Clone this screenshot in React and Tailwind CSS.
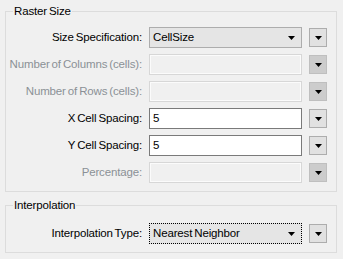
import React from "react";

const FONT = { fontFamily: '"Liberation Sans", Arial, sans-serif', wordSpacing: "-1px" };

function Arrow() {
  return (
    <svg width="7" height="4" viewBox="0 0 7 4" className="block">
      <polygon points="0,0 7,0 3.5,4" fill="#000" />
    </svg>
  );
}

function MenuButton({ disabled }) {
  return (
    <div
      className={`w-[18px] h-[19px] self-center flex items-center justify-center border ${
        disabled ? "bg-[#cccccc] border-[#bfbfbf]" : "bg-[#e1e1e1] border-[#adadad]"
      }`}
    >
      <Arrow />
    </div>
  );
}

function Combo({ value, focused }) {
  return (
    <div
      className={`h-[21px] flex items-center justify-between bg-[#e5e5e5] pl-[3px] pr-[6px] border ${
        focused ? "border-dotted border-black" : "border-[#adadad]"
      }`}
    >
      <span className="text-black leading-none">{value}</span>
      <Arrow />
    </div>
  );
}

function Field({ value, disabled }) {
  return disabled ? (
    <div className="h-[21px] border border-[#d7d7d7] bg-[#f0f0f0] shadow-[inset_0_0_0_1px_#fbfbfb]" />
  ) : (
    <div className="h-[21px] flex items-center border border-[#7a7a7a] bg-white pl-[3px] text-black">
      {value}
    </div>
  );
}

const rows = [
  { label: "Size Specification:", kind: "combo", value: "CellSize" },
  { label: "Number of Columns (cells):", kind: "field", disabled: true },
  { label: "Number of Rows (cells):", kind: "field", disabled: true },
  { label: "X Cell Spacing:", kind: "field", value: "5" },
  { label: "Y Cell Spacing:", kind: "field", value: "5" },
  { label: "Percentage:", kind: "field", disabled: true },
];

export default function App() {
  return (
    <div
      className="w-[343px] h-[259px] bg-[#f0f0f0] text-[11.5px] tracking-[-0.15px] pt-[3px] pl-[5px] overflow-hidden"
      style={FONT}
    >
      {/* Raster Size */}
      <fieldset className="w-[332px] border border-[#dcdcdc] pb-[8px]">
        <legend className="ml-[7px] px-px h-4 leading-4 text-black">Raster Size</legend>
        <div className="grid grid-cols-[136px_153px_18px] gap-x-[7px] gap-y-[6px] pt-[8px]">
          {rows.map((r) => (
            <React.Fragment key={r.label}>
              <div
                className={`h-[21px] flex items-center justify-end whitespace-nowrap ${
                  r.disabled ? "text-[#8b9096]" : "text-black"
                }`}
              >
                {r.label}
              </div>
              {r.kind === "combo" ? (
                <Combo value={r.value} />
              ) : (
                <Field value={r.value} disabled={r.disabled} />
              )}
              <MenuButton disabled={r.disabled} />
            </React.Fragment>
          ))}
        </div>
      </fieldset>

      {/* Interpolation */}
      <fieldset className="w-[332px] border border-[#dcdcdc] mt-[5px] pb-[8px]">
        <legend className="ml-[7px] px-px h-4 leading-4 text-black">Interpolation</legend>
        <div className="grid grid-cols-[136px_153px_18px] gap-x-[7px] pt-[10px]">
          <div className="h-[21px] flex items-center justify-end whitespace-nowrap text-black">
            Interpolation Type:
          </div>
          <Combo value="Nearest Neighbor" focused />
          <MenuButton />
        </div>
      </fieldset>
    </div>
  );
}
